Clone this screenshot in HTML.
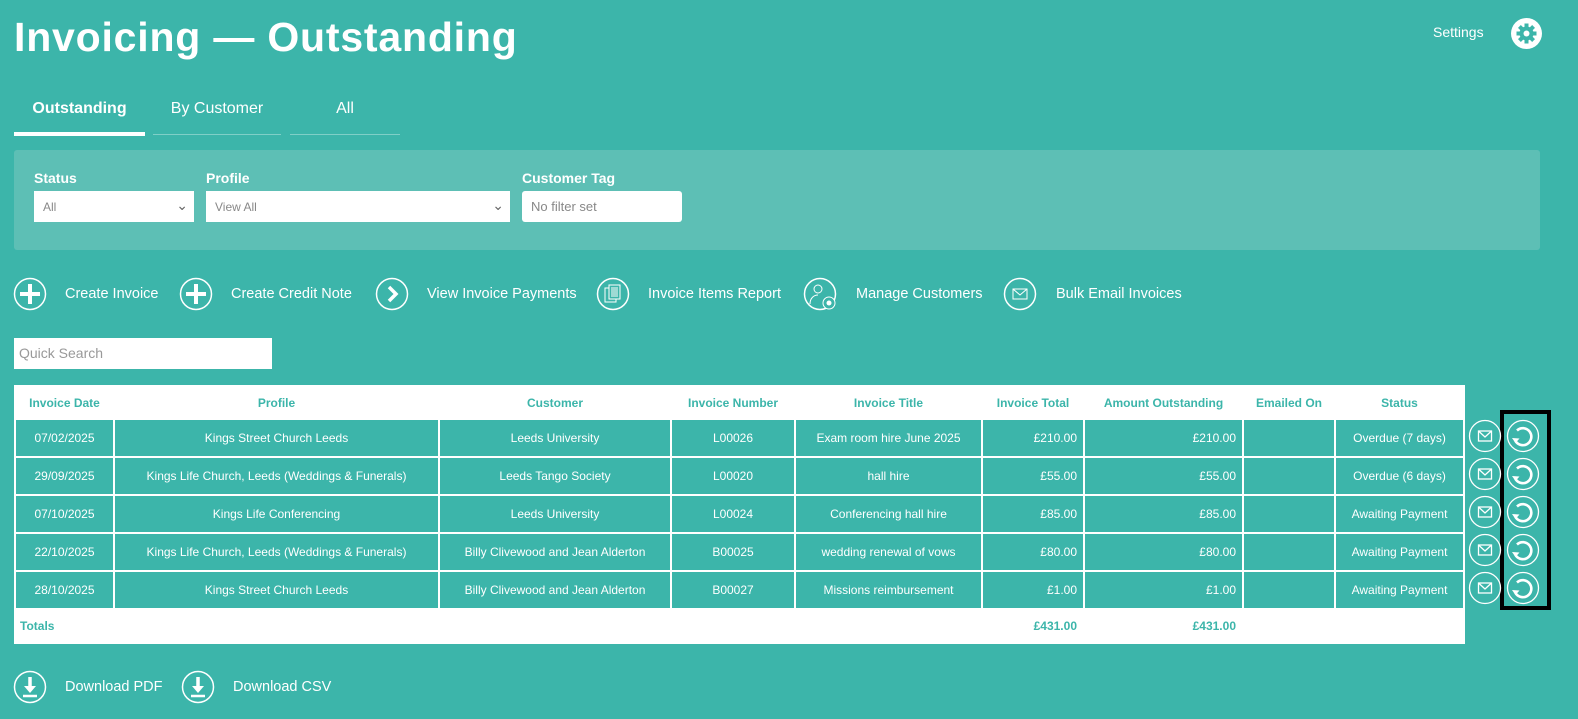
<!DOCTYPE html>
<html><head><meta charset="utf-8"><style>
*{box-sizing:border-box;margin:0;padding:0}
html,body{overflow:hidden}
body{width:1578px;height:719px;background:#3cb5aa;font-family:"Liberation Sans",sans-serif;color:#fff;position:relative}
.a{position:absolute}
h1{position:absolute;left:14px;top:14px;font-size:41px;font-weight:bold;letter-spacing:0.8px}
.tab{position:absolute;top:100px;font-size:16px;text-align:center}
.lbl{position:absolute;top:170px;font-size:14px;font-weight:bold}
.sel{position:absolute;top:191px;height:31px;background:#fff;color:#888;font-size:12px;padding:9px 9px}
.act{position:absolute;top:286px;font-size:14.5px}
table{position:absolute;left:14px;top:385px;width:1449px;border-collapse:collapse;background:#fff;table-layout:fixed}
td,th{font-size:12px;text-align:center;border:2px solid #fff;height:38px;padding:0 6px}
th{color:#3cb5aa;height:33px;font-weight:bold}
td{background:#3cb5aa;color:#fff}
tr.tot td{background:#fff;color:#3cb5aa;font-weight:bold;height:34px}
.r{text-align:right}
</style></head><body>
<h1>Invoicing — Outstanding</h1>
<div class="a" style="left:1433px;top:24px;font-size:14px">Settings</div>
<svg class="a" style="left:1510px;top:17px" width="33" height="33" viewBox="0 0 33 33"><circle cx="16.5" cy="16.5" r="15.5" fill="#fff"/><g fill="#3cb5aa"><circle cx="16.5" cy="16.5" r="7"/><rect x="14.5" y="6.5" width="4" height="20"/><rect x="6.5" y="14.5" width="20" height="4"/><rect x="14.5" y="6.5" width="4" height="20" transform="rotate(45 16.5 16.5)"/><rect x="14.5" y="6.5" width="4" height="20" transform="rotate(-45 16.5 16.5)"/></g><circle cx="16.5" cy="16.5" r="3" fill="#fff"/></svg>

<div class="tab" style="left:14px;width:131px;font-weight:bold">Outstanding</div>
<div class="tab" style="left:153px;width:128px">By Customer</div>
<div class="tab" style="left:290px;width:110px">All</div>
<div class="a" style="left:14px;top:132px;width:131px;height:4px;background:#fff"></div>
<div class="a" style="left:153px;top:134px;width:128px;height:1px;background:#7fcfc7"></div>
<div class="a" style="left:290px;top:134px;width:110px;height:1px;background:#7fcfc7"></div>

<div class="a" style="left:14px;top:150px;width:1526px;height:100px;background:#5dbfb5;border-radius:3px"></div>
<div class="lbl" style="left:34px">Status</div>
<div class="lbl" style="left:206px">Profile</div>
<div class="lbl" style="left:522px">Customer Tag</div>
<div class="sel" style="left:34px;width:160px">All<span style="position:absolute;right:6px;top:6px;font-size:14px;color:#666">&#8964;</span></div>
<div class="sel" style="left:206px;width:304px">View All<span style="position:absolute;right:6px;top:6px;font-size:14px;color:#666">&#8964;</span></div>
<div class="sel" style="left:522px;width:160px;border-radius:3px;font-size:13px;padding-top:8px">No filter set</div>

<svg class="a" style="left:13px;top:277px" width="34" height="34"><circle cx="17" cy="17" r="15.5" fill="none" stroke="#fff" stroke-width="1.5"/><path d="M17 7v20M7 17h20" stroke="#fff" stroke-width="4"/></svg>
<div class="act" style="left:65px">Create Invoice</div>
<svg class="a" style="left:179px;top:277px" width="34" height="34"><circle cx="17" cy="17" r="15.5" fill="none" stroke="#fff" stroke-width="1.5"/><path d="M17 7v20M7 17h20" stroke="#fff" stroke-width="4"/></svg>
<div class="act" style="left:231px">Create Credit Note</div>
<svg class="a" style="left:375px;top:277px" width="34" height="34"><circle cx="17" cy="17" r="15.5" fill="none" stroke="#fff" stroke-width="1.5"/><path d="M14 10l7 7-7 7" fill="none" stroke="#fff" stroke-width="3.5"/></svg>
<div class="act" style="left:427px">View Invoice Payments</div>
<svg class="a" style="left:596px;top:277px" width="34" height="34"><circle cx="17" cy="17" r="15.5" fill="none" stroke="#fff" stroke-width="1.5"/><rect x="9" y="11" width="11" height="14" fill="#3cb5aa" stroke="#fff"/><rect x="13" y="8" width="11" height="14" fill="#3cb5aa" stroke="#fff"/><path d="M15 11h7M15 13h7M15 15h7M15 17h7M15 19h7" stroke="#fff"/></svg>
<div class="act" style="left:648px">Invoice Items Report</div>
<svg class="a" style="left:803px;top:277px" width="36" height="36"><circle cx="17" cy="17" r="15.5" fill="none" stroke="#fff" stroke-width="1.5"/><circle cx="15" cy="12" r="4" fill="none" stroke="#fff"/><path d="M7 27c0-6 4-9 8-9" fill="none" stroke="#fff"/><circle cx="26" cy="26" r="6" fill="#3cb5aa" stroke="#fff"/><circle cx="26" cy="26" r="2.5" fill="#fff"/></svg>
<div class="act" style="left:856px">Manage Customers</div>
<svg class="a" style="left:1003px;top:277px" width="34" height="34"><circle cx="17" cy="17" r="15.5" fill="none" stroke="#fff" stroke-width="1.5"/><rect x="10" y="12" width="14" height="10" fill="none" stroke="#fff"/><path d="M10 12l7 6 7-6" fill="none" stroke="#fff"/></svg>
<div class="act" style="left:1056px">Bulk Email Invoices</div>

<div class="a" style="left:14px;top:338px;width:258px;height:31px;background:#fff;color:#999;font-size:14px;padding:7px 5px">Quick Search</div>

<table>
<colgroup><col style="width:99px"><col style="width:325px"><col style="width:232px"><col style="width:124px"><col style="width:187px"><col style="width:102px"><col style="width:159px"><col style="width:92px"><col style="width:129px"></colgroup>
<tr><th>Invoice Date</th><th>Profile</th><th>Customer</th><th>Invoice Number</th><th>Invoice Title</th><th>Invoice Total</th><th>Amount Outstanding</th><th>Emailed On</th><th>Status</th></tr>
<tr><td>07/02/2025</td><td>Kings Street Church Leeds</td><td>Leeds University</td><td>L00026</td><td>Exam room hire June 2025</td><td class="r">£210.00</td><td class="r">£210.00</td><td></td><td>Overdue (7 days)</td></tr>
<tr><td>29/09/2025</td><td>Kings Life Church, Leeds (Weddings &amp; Funerals)</td><td>Leeds Tango Society</td><td>L00020</td><td>hall hire</td><td class="r">£55.00</td><td class="r">£55.00</td><td></td><td>Overdue (6 days)</td></tr>
<tr><td>07/10/2025</td><td>Kings Life Conferencing</td><td>Leeds University</td><td>L00024</td><td>Conferencing hall hire</td><td class="r">£85.00</td><td class="r">£85.00</td><td></td><td>Awaiting Payment</td></tr>
<tr><td>22/10/2025</td><td>Kings Life Church, Leeds (Weddings &amp; Funerals)</td><td>Billy Clivewood and Jean Alderton</td><td>B00025</td><td>wedding renewal of vows</td><td class="r">£80.00</td><td class="r">£80.00</td><td></td><td>Awaiting Payment</td></tr>
<tr><td>28/10/2025</td><td>Kings Street Church Leeds</td><td>Billy Clivewood and Jean Alderton</td><td>B00027</td><td>Missions reimbursement</td><td class="r">£1.00</td><td class="r">£1.00</td><td></td><td>Awaiting Payment</td></tr>
<tr class="tot"><td style="text-align:left;padding-left:4px">Totals</td><td></td><td></td><td></td><td></td><td class="r">£431.00</td><td class="r">£431.00</td><td></td><td></td></tr>
</table>

<div class="a" style="left:1500px;top:410px;width:51px;height:200px;border:4px solid #000"></div>
<svg class="a" style="left:1468px;top:418px" width="80" height="190">
<defs>
<g id="m"><circle cx="17" cy="18" r="15.5" fill="none" stroke="#fff" stroke-width="1.3"/><rect x="10.5" y="13" width="13" height="10" fill="none" stroke="#fff" stroke-width="1.3"/><path d="M10.5 13l6.5 6 6.5-6" fill="none" stroke="#fff" stroke-width="1.3"/></g>
<g id="r"><circle cx="55" cy="18" r="15.5" fill="none" stroke="#fff" stroke-width="1.3"/><path d="M49 12.5A8.5 8.5 0 1 1 47 22" fill="none" stroke="#fff" stroke-width="2.6"/><path d="M44 20l3.5 5 4-4.5z" fill="#fff"/></g>
</defs>
<use href="#m"/><use href="#r"/>
<use href="#m" y="38"/><use href="#r" y="38"/>
<use href="#m" y="76"/><use href="#r" y="76"/>
<use href="#m" y="114"/><use href="#r" y="114"/>
<use href="#m" y="152"/><use href="#r" y="152"/>
</svg>

<svg class="a" style="left:13px;top:670px" width="34" height="34"><circle cx="17" cy="17" r="15.5" fill="none" stroke="#fff" stroke-width="1.5"/><path d="M17 7v13" stroke="#fff" stroke-width="3.5"/><path d="M11 16l6 7 6-7z" fill="#fff"/><path d="M10 26h14" stroke="#fff" stroke-width="2.5"/></svg>
<div class="act" style="left:65px;top:679px">Download PDF</div>
<svg class="a" style="left:181px;top:670px" width="34" height="34"><circle cx="17" cy="17" r="15.5" fill="none" stroke="#fff" stroke-width="1.5"/><path d="M17 7v13" stroke="#fff" stroke-width="3.5"/><path d="M11 16l6 7 6-7z" fill="#fff"/><path d="M10 26h14" stroke="#fff" stroke-width="2.5"/></svg>
<div class="act" style="left:233px;top:679px">Download CSV</div>
</body></html>
